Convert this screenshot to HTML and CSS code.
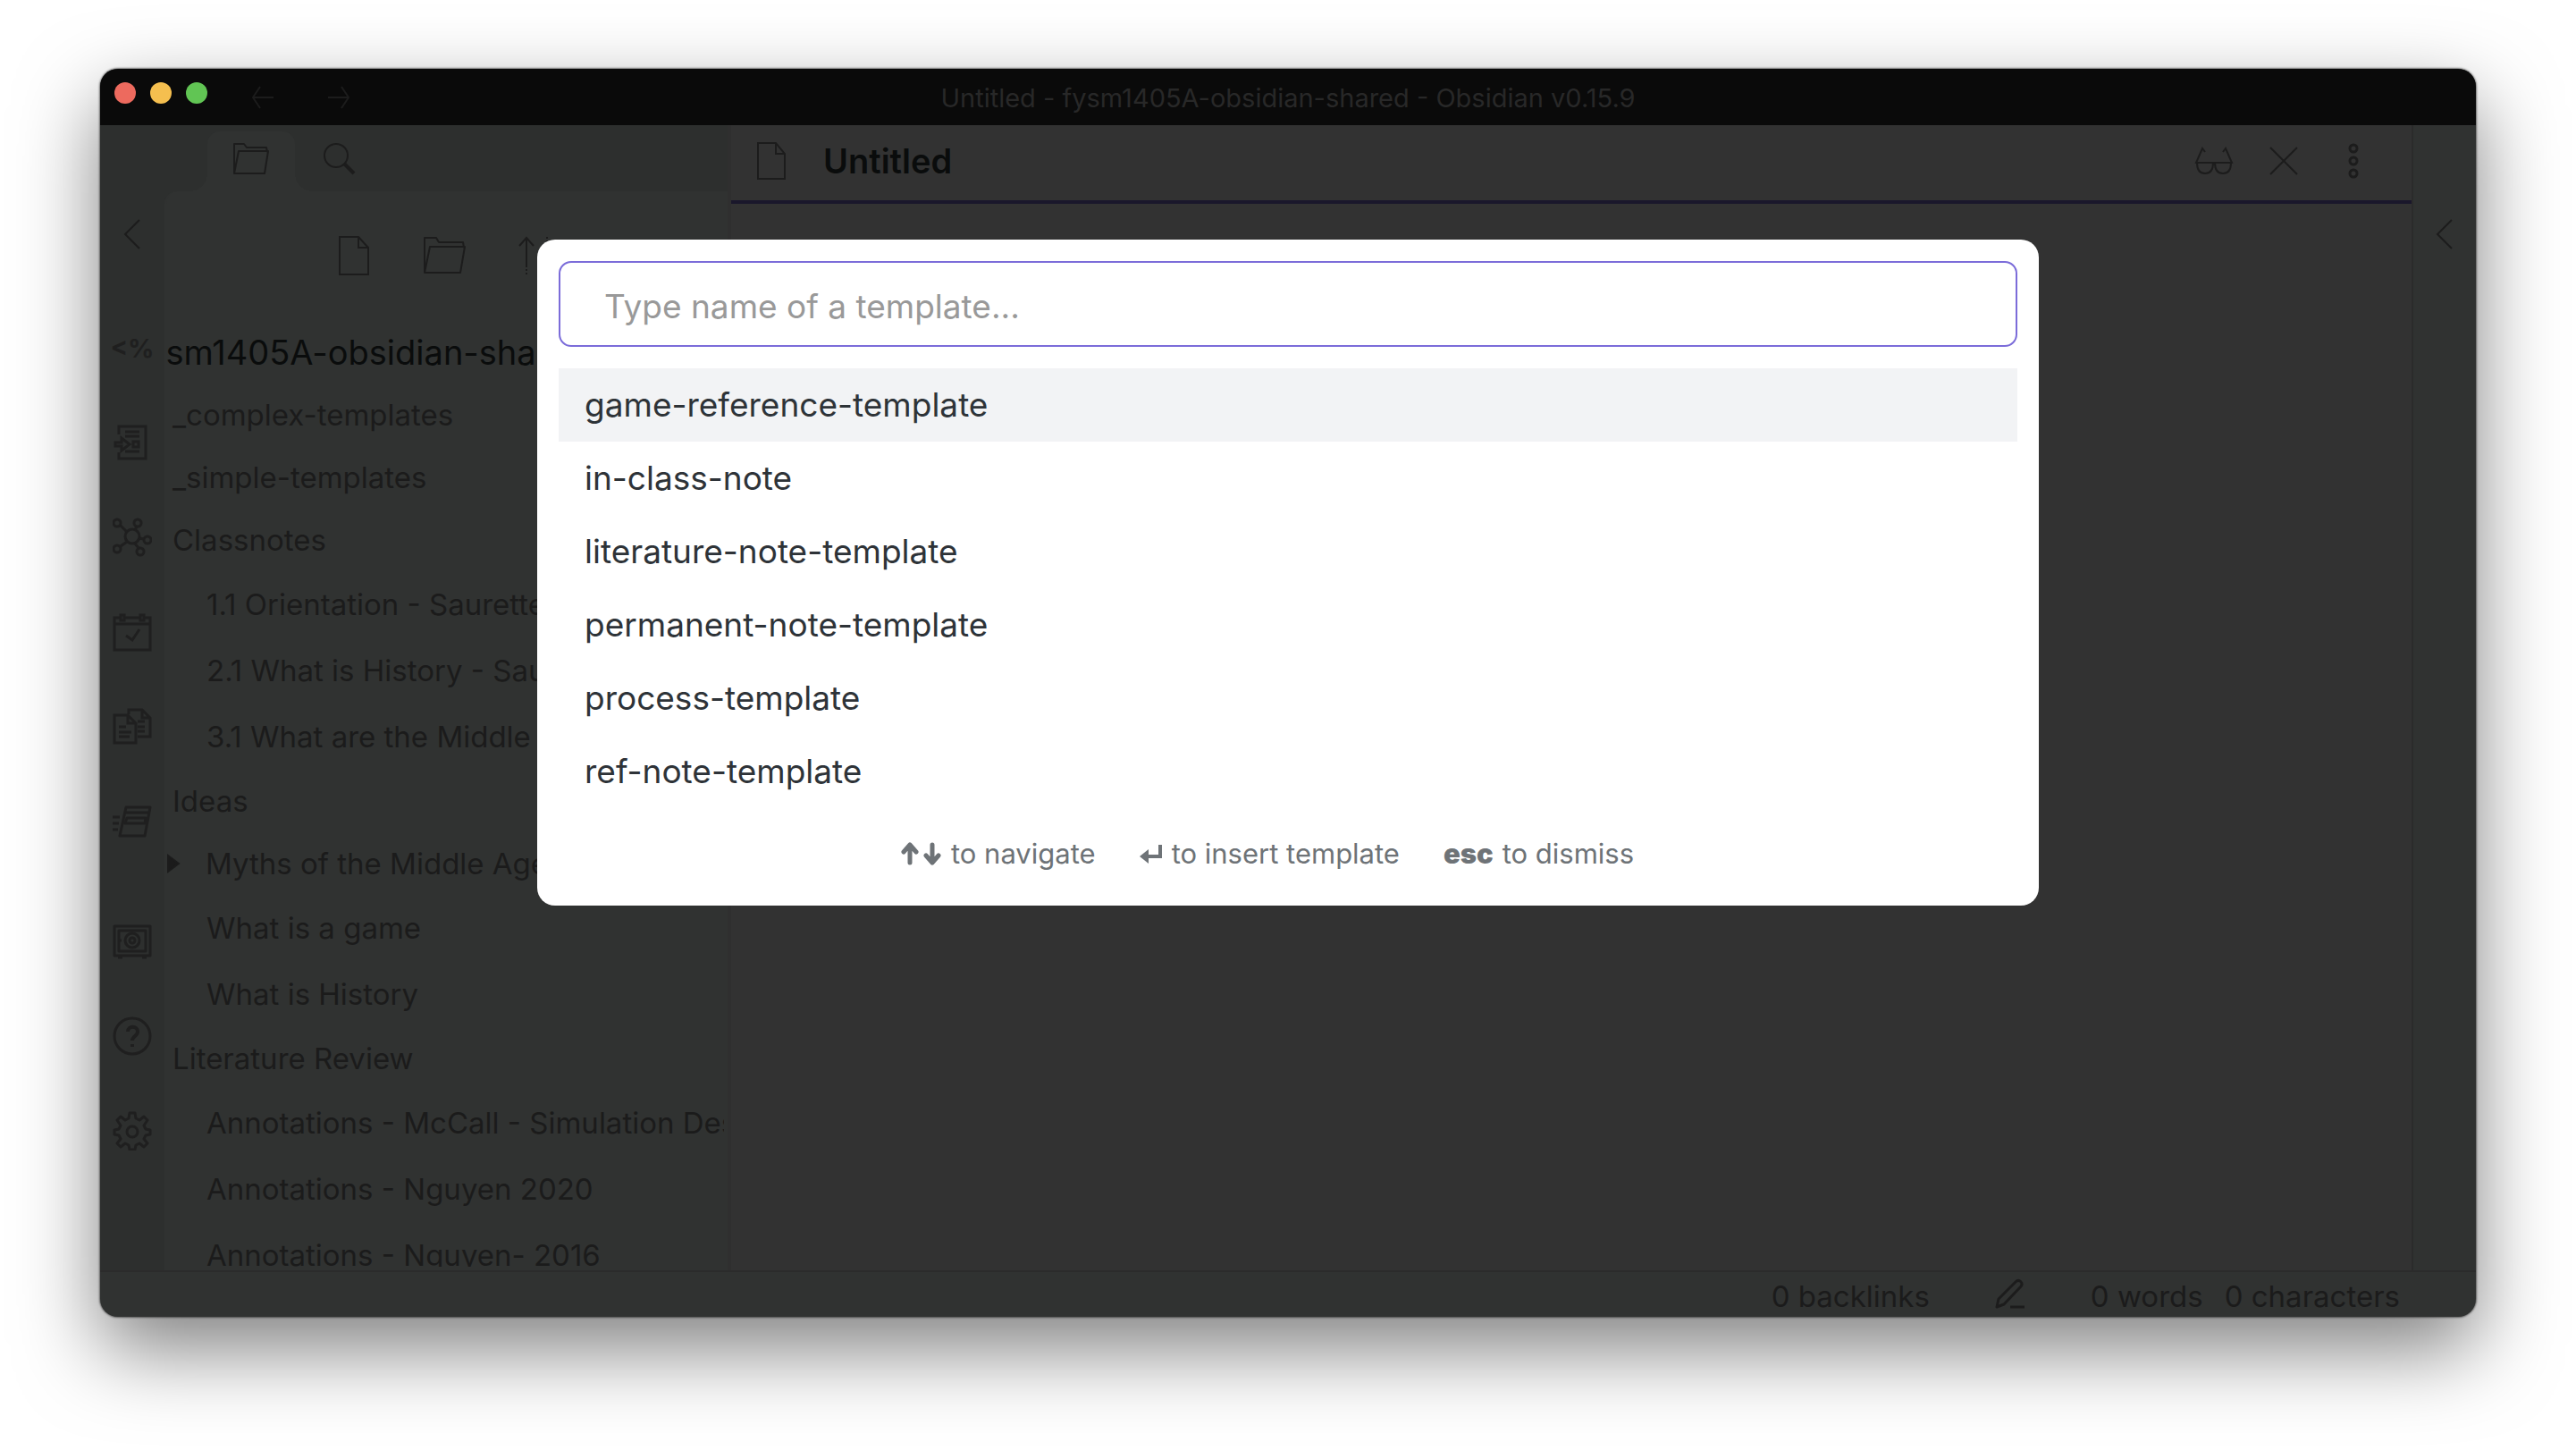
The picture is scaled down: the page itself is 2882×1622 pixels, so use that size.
FILE: index.html
```html
<!DOCTYPE html>
<html lang="en">
<head>
<meta charset="utf-8">
<title>Untitled - fysm1405A-obsidian-shared - Obsidian v0.15.9</title>
<link rel="stylesheet" href="styles.css">
</head>
<body>
<div class="window">
  <header class="titlebar">
    <div class="controls">
      <button class="light close" aria-label="Close window"></button>
      <button class="light minimize" aria-label="Minimize window"></button>
      <button class="light maximize" aria-label="Maximize window"></button>
      <button class="icon-btn history" aria-label="Back"><svg width="26" height="28" viewBox="0 0 26 28"><path d="M25 14H2M10 2L2 14l8 12"/></svg></button>
      <button class="icon-btn history" aria-label="Forward"><svg width="26" height="28" viewBox="0 0 26 28"><path d="M1 14h23M16 2l8 12-8 12"/></svg></button>
    </div>
    <div class="window-title">Untitled - fysm1405A-obsidian-shared - Obsidian v0.15.9</div>
  </header>

  <div class="workspace">
    <nav class="ribbon" aria-label="Actions">
      <button class="icon-btn collapse" aria-label="Collapse sidebar"><svg width="20" height="36" viewBox="0 0 20 36"><path d="M18 2L2 18l16 16"/></svg></button>
      <button class="icon-btn action templater" aria-label="Templater">&lt;%</button>
      <button class="icon-btn action" aria-label="Insert template"><svg width="44" height="44" viewBox="0 0 44 44"><path d="M7 13V4h30v36H7v-7M14 10h16M14 15h16M14 32h16M23 21h6v6h-6zM3 22h7v-5l9 7-9 7v-5H3z"/></svg></button>
      <button class="icon-btn action" aria-label="Open graph view"><svg width="44" height="44" viewBox="0 0 44 44"><circle cx="22" cy="21" r="8"/><circle cx="5" cy="6" r="4"/><circle cx="28" cy="6" r="4"/><circle cx="39" cy="25" r="4"/><circle cx="31" cy="38" r="4"/><circle cx="5" cy="35" r="4"/><path d="M9 9l7 7M27 10l-2 4M30 23l5 1M25 29l4 5M16 27l-7 5"/></svg></button>
      <button class="icon-btn action" aria-label="Open daily note"><svg width="44" height="44" viewBox="0 0 44 44"><path d="M9 6H2v36h40V6h-7M13 6h18M2 13h40M15 26l7 5 8-12M9 3h4v6H9zM31 3h4v6h-4z"/></svg></button>
      <button class="icon-btn action" aria-label="Open random note"><svg width="44" height="44" viewBox="0 0 44 44"><path d="M2 9h15l9 9v22H2zM17 9v9h9M7 22h8M7 28h14M7 33h12M18 8V3h15l9 9v21H28M33 3v9h9M28 16h8M28 22h8M28 27h8"/></svg></button>
      <button class="icon-btn action" aria-label="Open command palette"><svg width="44" height="44" viewBox="0 0 44 44"><path stroke-linejoin="round" d="M15 6h27l-6 32H8zM14 12h27M16 18h21l-1 6H14zM0 17h8M0 24h7M0 31h6"/></svg></button>
      <button class="icon-btn action vault" aria-label="Open another vault"><svg width="44" height="44" viewBox="0 0 44 44"><path stroke-linejoin="round" d="M2 5h40v33H2zM7 10h30v23H7zM6 40h5M33 40h5M8 21h2"/><circle cx="22" cy="21" r="8"/><circle cx="22" cy="21" r="3"/></svg></button>
      <button class="icon-btn action" aria-label="Help"><svg width="44" height="44" viewBox="0 0 44 44"><circle cx="22" cy="22" r="20"/><path class="bold" d="M17 17c0-7 11-7 11 0 0 5-6 5-6 10M22 31v3"/></svg></button>
      <button class="icon-btn action" aria-label="Settings"><svg width="44" height="44" viewBox="0 0 44 44"><path stroke-linejoin="round" d="M19 2h6l1 6 4 2 5-4 4 4-4 6 2 4 5 1v5l-5 1-2 4 4 5-4 4-5-4-4 2-1 5h-6l-1-5-4-2-5 4-4-4 4-5-2-4-5-1v-5l5-1 2-4-4-6 4-4 5 4 4-2z"/><circle cx="22" cy="23" r="6"/></svg></button>
    </nav>

    <aside class="sidebar">
      <div class="tabs">
        <button class="icon-btn tab active" aria-label="Files"><svg width="44" height="40" viewBox="0 0 44 40"><path stroke-linejoin="round" d="M3 36V3h11l3 4h22l1 5M3 36l5-25h33l-4 25z"/></svg></button>
        <button class="icon-btn tab" aria-label="Search"><svg width="40" height="40" viewBox="0 0 40 40"><circle cx="17" cy="16" r="13"/><path class="bold" d="M26 25l11 11"/></svg></button>
      </div>
      <div class="files">
        <div class="file-actions">
          <button class="icon-btn" aria-label="New note"><svg width="36" height="46" viewBox="0 0 36 46"><path d="M2 2h21l11 12v30H2zM23 2v12h11"/></svg></button>
          <button class="icon-btn" aria-label="New folder"><svg width="50" height="46" viewBox="0 0 50 46"><path stroke-linejoin="round" d="M3 42V3h13l3 5h27l1 6M3 42l6-29h39l-5 29z"/></svg></button>
          <button class="icon-btn" aria-label="Change sort order"><svg width="50" height="46" viewBox="0 0 50 46"><path d="M9 36V3M1 12l8-9 8 9M9 38v2M9 42v2M32 2v2M32 6v38M24 34l8 9 8-9"/></svg></button>
        </div>
        <div class="vault-name">fysm1405A-obsidian-shared</div>
        <ul class="tree">
          <li class="folder">_complex-templates</li>
          <li class="folder">_simple-templates</li>
          <li class="folder">Classnotes</li>
          <li class="file">1.1 Orientation - Saurette</li>
          <li class="file">2.1 What is History - Saurette</li>
          <li class="file">3.1 What are the Middle Ages</li>
          <li class="folder">Ideas</li>
          <li class="folder nested"><svg class="caret" width="16" height="22" viewBox="0 0 16 22"><path d="M2 2l12 9-12 9z"/></svg>Myths of the Middle Ages</li>
          <li class="file">What is a game</li>
          <li class="file">What is History</li>
          <li class="folder">Literature Review</li>
          <li class="file">Annotations - McCall - Simulation Design</li>
          <li class="file">Annotations - Nguyen 2020</li>
          <li class="file">Annotations - Nguyen- 2016</li>
        </ul>
      </div>
    </aside>

    <main class="pane">
      <header class="pane-header">
        <svg width="36" height="44" viewBox="0 0 36 44"><path d="M3 2h20l10 12v28H3zM23 2v12h10"/></svg>
        <h1>Untitled</h1>
        <div class="pane-actions">
          <button class="icon-btn" aria-label="Reading view"><svg width="44" height="32" viewBox="0 0 44 32"><path d="M12 6l-3-4-7 16h40L35 2l-3 4M3 18c0 8 3 12 9 12s9-4 9-12M23 18c0 8 3 12 9 12s9-4 9-12"/></svg></button>
          <button class="icon-btn" aria-label="Close"><svg width="32" height="32" viewBox="0 0 32 32"><path d="M1 1l30 30M31 1L1 31"/></svg></button>
          <button class="icon-btn more" aria-label="More options"><svg width="12" height="40" viewBox="0 0 12 40"><circle cx="6" cy="6" r="4"/><circle cx="6" cy="20" r="4"/><circle cx="6" cy="34" r="4"/></svg></button>
        </div>
      </header>
    </main>

    <nav class="ribbon right" aria-label="Right sidebar">
      <button class="icon-btn collapse" aria-label="Expand sidebar"><svg width="20" height="36" viewBox="0 0 20 36"><path d="M18 2L2 18l16 16"/></svg></button>
    </nav>
  </div>

  <footer class="status">
    <span>0 backlinks</span>
    <svg width="36" height="36" viewBox="0 0 36 36"><path stroke-linejoin="round" d="M3 32l2-9L24 4c4-4 9 1 6 5L11 29zM18 32h16"/></svg>
    <span>0 words</span>
    <span>0 characters</span>
  </footer>

  <div class="modal" role="dialog" aria-label="Insert template">
    <input class="query" type="text" placeholder="Type name of a template..." aria-label="Template name">
    <ul class="results">
      <li class="selected">game-reference-template</li>
      <li>in-class-note</li>
      <li>literature-note-template</li>
      <li>permanent-note-template</li>
      <li>process-template</li>
      <li>ref-note-template</li>
    </ul>
    <div class="hints">
      <span class="hint"><svg width="46" height="26" viewBox="0 0 46 26"><path d="M10 23V3M3 11l7-8 7 8M35 3v20M28 15l7 8 7-8"/></svg>to navigate</span>
      <span class="hint"><svg width="26" height="26" viewBox="0 0 26 26"><path class="enter" d="M23 3v13H8"/><path class="tip" d="M0 16l10-8v16z"/></svg>to insert template</span>
      <span class="hint"><kbd>esc</kbd>to dismiss</span>
    </div>
  </div>
</div>
</body>
</html>
```
FILE: styles.css
```css
* { box-sizing: border-box; }

body {
  margin: 0;
  min-height: 100vh;
  padding: 77px 112px 149px;
  display: flex;
  background: #fff;
  color: #1b1b1b;
  font-family: Inter, "Liberation Sans", sans-serif;
  font-size: 33px;
  white-space: nowrap;
}

ul { list-style: none; margin: 0; padding: 0; }

svg {
  display: block;
  flex: none;
  fill: none;
  stroke: #1c1c1c;
  stroke-width: 2;
}

.bold { stroke-width: 4; }

.icon-btn {
  display: flex;
  align-items: center;
  justify-content: center;
  flex: none;
  padding: 0;
  border: 0;
  background: none;
  color: #1f1f1f;
  font: inherit;
}

.window {
  position: relative;
  flex: 1;
  min-width: 0;
  display: flex;
  flex-direction: column;
  border-radius: 20px;
  background: #303231;
  box-shadow: 0 0 2px 1px rgba(0, 0, 0, .5), 0 36px 90px rgba(0, 0, 0, .5);
}

/* Title bar */
.titlebar {
  display: grid;
  grid-template-columns: 1fr auto 1fr;
  align-items: center;
  height: 63px;
  border-radius: 20px 20px 0 0;
  background: #0a0a0a;
}
.controls { display: flex; gap: 16px; padding: 0 16px 10px; }
.light { width: 24px; height: 24px; padding: 0; border: 0; border-radius: 50%; }
.close { background: #ed6a5e; }
.minimize { background: #f5bf4f; }
.maximize { background: #61c554; }
.history { height: 24px; padding-top: 10px; margin-left: 33px; }
.history + .history { margin-left: 43px; }
.history svg { stroke: #1c1c1c; }
.window-title { padding-top: 2px; color: #282828; font-size: 29px; }

/* Workspace */
.workspace { flex: 1; display: flex; min-height: 0; }

.ribbon {
  width: 72px;
  display: flex;
  flex-direction: column;
  align-items: center;
  background: #2d2f2e;
}
.collapse { height: 60px; margin: 92px 0 44px; }
.action { height: 106px; }
.action svg { stroke: #1f1f1f; stroke-width: 3; }
.templater { font-size: 29px; font-weight: 700; }
.vault { margin-top: 28px; }
.right { border-left: 2px solid #2b2b2b; background: #303231; }

.sidebar {
  width: 634px;
  display: flex;
  flex-direction: column;
  border-right: 4px solid #2f2f2f;
  background: #2d2f2e;
}
.tabs { display: flex; height: 74px; padding: 7px 0 0 48px; }
.tab { width: 98px; padding-bottom: 6px; }
.active {
  position: relative;
  border-radius: 14px 14px 0 0;
  background: #303231;
}
/* Flared feet that join the active tab to the panel */
.active::before,
.active::after {
  content: "";
  position: absolute;
  bottom: 0;
  width: 20px;
  height: 20px;
}
.active::before { right: 100%; background: radial-gradient(circle at 0 0, transparent 20px, #303231 20px); }
.active::after { left: 100%; background: radial-gradient(circle at 100% 0, transparent 20px, #303231 20px); }
.files {
  flex: 1 1 0;
  min-height: 0;
  overflow: hidden;
  border: solid #303231;
  border-width: 0 4px 4px 2px;
  border-radius: 14px 0 0 0;
  background: #303231;
}
.file-actions { display: flex; justify-content: center; gap: 58px; padding: 49px 0 0 12px; }
.vault-name {
  height: 68px;
  margin: 51px 0 1px -36px;
  line-height: 68px;
  color: #0a0c0c;
  font-size: 38px;
}
.tree li { padding-left: 7px; }
.tree .folder { height: 70px; line-height: 70px; }
.tree .file { height: 74px; line-height: 74px; padding-left: 45px; }
.tree .nested { display: flex; align-items: center; gap: 28px; padding-left: 0; }
.caret path { fill: #1b1b1b; }

.pane { flex: 1; min-width: 0; background: #323232; }
.pane-header {
  display: flex;
  align-items: center;
  height: 88px;
  padding: 0 59px 4px 27px;
  border-bottom: 4px solid #1a172b;
}
.pane-header h1 { margin: 0 0 0 40px; color: #0a0c0c; font-size: 38px; font-weight: 600; }
.pane-actions { display: flex; align-items: center; gap: 40px; margin-left: auto; }
.more { margin-left: 16px; }
.more svg { stroke-width: 3; }

/* Status bar */
.status {
  display: flex;
  align-items: center;
  justify-content: flex-end;
  height: 52px;
  padding: 4px 85px 0 0;
  border-top: 2px solid #2b2b2b;
  border-radius: 0 0 20px 20px;
}
.status svg { margin: 0 72px 4px; stroke-width: 3; }
.status span + span { margin-left: 24px; }

/* Template picker */
.modal {
  position: absolute;
  top: 191px;
  left: 489px;
  right: 489px;
  padding: 24px;
  border-radius: 20px;
  background: #fff;
  color: #2e3338;
}
.query {
  display: block;
  width: 100%;
  height: 96px;
  padding: 4px 49px 0;
  border: 2px solid #7b6cd9;
  border-radius: 14px;
  outline: 0;
  background: #fff;
  color: #2e3338;
  font: inherit;
  font-size: 37px;
}
.query::placeholder { color: #999; opacity: 1; }
.results { margin-top: 24px; font-size: 37px; }
.results li { height: 82px; padding: 0 29px; line-height: 82px; }
.results .selected { background: #f2f3f5; }
.hints {
  display: flex;
  justify-content: center;
  gap: 49px;
  padding: 32px 46px 16px 0;
  color: #6e7377;
  font-size: 31px;
}
.hint { display: flex; align-items: center; gap: 10px; }
.hint svg { stroke: #6e7377; stroke-width: 5; stroke-linecap: round; stroke-linejoin: round; }
.hint .enter { stroke-linecap: butt; stroke-linejoin: miter; stroke-width: 4; }
.hint .tip { fill: #6e7377; stroke: none; }
kbd { font: inherit; font-weight: 900; }
```
